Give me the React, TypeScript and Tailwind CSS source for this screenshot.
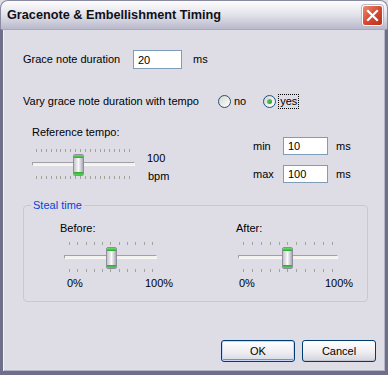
import React from 'react';

type SliderProps = {
  width: string;
  tickPad: string;
  ticks: number;
  thumb: string;
};

function Slider({ width, tickPad, ticks, thumb }: SliderProps) {
  const marks = Array.from({ length: ticks }, (_, i) => i);
  return (
    <div className={`relative h-[30px] ${width}`}>
      <div className={`flex h-[3px] justify-between ${tickPad}`}>
        {marks.map((i) => (
          <span key={i} className="h-[3px] w-px bg-[#a3a39a]" />
        ))}
      </div>
      <div className="mt-[10px] h-[4px] rounded-[1px] border border-t-[#a0a0a6] border-l-[#a0a0a6] border-b-[#f7f7f7] border-r-[#f7f7f7] bg-[#f3f3ee]" />
      <div className={`mt-[10px] flex h-[3px] justify-between ${tickPad}`}>
        {marks.map((i) => (
          <span key={i} className="h-[3px] w-px bg-[#a3a39a]" />
        ))}
      </div>
      <div
        className={`absolute top-[5px] flex h-[22px] w-[11px] flex-col overflow-hidden rounded-[2px] border border-[#8e8e9c] bg-gradient-to-r from-[#c4c4cc] via-[#fafafb] to-[#a9a9b6] ${thumb}`}
      >
        <span className="h-[3px] bg-gradient-to-b from-[#6fdc6f] to-[#27a827]" />
        <span className="flex-1" />
        <span className="h-[3px] bg-gradient-to-b from-[#27a827] to-[#5ed35e]" />
      </div>
    </div>
  );
}

function Radio({ checked }: { checked?: boolean }) {
  return (
    <span className="flex h-[13px] w-[13px] items-center justify-center rounded-full border border-[#1c5180] bg-gradient-to-br from-[#d6d6d0] to-[#ffffff]">
      {checked && (
        <span className="h-[5px] w-[5px] rounded-full bg-gradient-to-br from-[#62d862] to-[#1e9a1e]" />
      )}
    </span>
  );
}

function Field({ value, width }: { value: string; width: string }) {
  return (
    <input
      readOnly
      value={value}
      className={`h-[18px] ${width} border border-[#7f9db9] bg-white pl-[4px] text-[11px] leading-[16px] text-black outline-none`}
    />
  );
}

export default function App() {
  return (
    <div className="flex h-[375px] w-[388px] flex-col bg-[#dedde6] font-['Liberation_Sans',Arial,sans-serif] text-[11px] leading-[13px] text-black">
      <div className="flex h-[29px] items-center justify-between rounded-t-[8px] border border-b-0 border-[#8a8aa3] bg-gradient-to-b from-[#fdfdfe] via-[#e2e2ea] to-[#b8b8cb] pl-[6px] pr-[4px]">
        <span className="text-[12.7px] font-bold text-[#101018]">Gracenote &amp; Embellishment Timing</span>
        <button className="flex h-[21px] w-[21px] items-center justify-center rounded-[3px] border border-white bg-gradient-to-br from-[#ec8a70] via-[#d54a33] to-[#b8301c] shadow-[0_0_0_1px_#b9b9c8]">
          <svg width="13" height="13" viewBox="0 0 13 13">
            <path d="M2 2 L11 11 M11 2 L2 11" stroke="white" strokeWidth="2.2" strokeLinecap="square" />
          </svg>
        </button>
      </div>

      <div className="flex flex-1 flex-col border-x-[3px] border-b-[4px] border-t border-[#6f6f8c] border-t-[#a9a9be] shadow-[inset_1px_0_0_#f2f2f7,inset_-1px_0_0_#b4b4c6,inset_0_-1px_0_#b4b4c6]">
        <div className="flex flex-col pl-[20px] pt-[20px]">
          <div className="flex h-[19px] items-center">
            <span className="w-[110px]">Grace note duration</span>
            <Field value="20" width="w-[49px] h-[19px]" />
            <span className="ml-[11px]">ms</span>
          </div>

          <div className="mt-[25px] flex h-[15px] items-center">
            <span className="w-[195px]">Vary grace note duration with tempo</span>
            <Radio />
            <span className="ml-[3px]">no</span>
            <span className="ml-[17px]">
              <Radio checked />
            </span>
            <span className="ml-[2px] border border-dotted border-black px-px leading-[13px]">yes</span>
          </div>

          <div className="mt-[17px] flex pl-[9px]">
            <div className="flex w-[221px] flex-col">
              <span>Reference tempo:</span>
              <div className="mt-[10px] flex">
                <Slider width="w-[103px]" tickPad="pl-[4px] pr-[5px]" ticks={20} thumb="left-[41px]" />
                <div className="ml-[12px] flex flex-col pt-[3px]">
                  <span>100</span>
                  <span className="ml-px mt-[5px]">bpm</span>
                </div>
              </div>
            </div>
            <div className="mt-[11px] flex flex-col gap-[10px]">
              <div className="flex h-[18px] items-center">
                <span className="w-[30px]">min</span>
                <Field value="10" width="w-[45px]" />
                <span className="ml-[8px]">ms</span>
              </div>
              <div className="flex h-[18px] items-center">
                <span className="w-[30px]">max</span>
                <Field value="100" width="w-[45px]" />
                <span className="ml-[8px]">ms</span>
              </div>
            </div>
          </div>

          <fieldset className="mt-[16px] w-[345px] rounded-[4px] border border-[#cbcbbd] pb-[11px] pt-[10px]">
            <legend className="ml-[7px] px-[2px] text-[#0046d5]">Steal time</legend>
            <div className="flex pl-[36px]">
              <div className="flex w-[176px] flex-col">
                <span>Before:</span>
                <div className="ml-[4px] mt-[7px]">
                  <Slider width="w-[93px]" tickPad="pl-[5px] pr-[4px]" ticks={11} thumb="left-[42px]" />
                </div>
                <div className="ml-[7px] mt-[5px] flex">
                  <span className="w-[78px]">0%</span>
                  <span>100%</span>
                </div>
              </div>
              <div className="flex flex-col">
                <span>After:</span>
                <div className="ml-[2px] mt-[7px]">
                  <Slider width="w-[100px]" tickPad="px-[5px]" ticks={11} thumb="left-[44px]" />
                </div>
                <div className="ml-[3px] mt-[5px] flex">
                  <span className="w-[86px]">0%</span>
                  <span>100%</span>
                </div>
              </div>
            </div>
          </fieldset>
        </div>

        <div className="mt-[38px] flex justify-end gap-[7px] pr-[9px]">
          <button className="h-[22px] w-[74px] rounded-[3px] border border-[#003c74] bg-gradient-to-b from-[#ffffff] via-[#f0f0f4] to-[#d8d8e2] shadow-[inset_0_0_0_1px_#c6d6f7,inset_0_-2px_0_#6f93db]">
            OK
          </button>
          <button className="h-[22px] w-[74px] rounded-[3px] border border-[#003c74] bg-gradient-to-b from-[#ffffff] via-[#f0f0f4] to-[#d4d4de] shadow-[inset_0_-1px_0_#c4c4d0]">
            Cancel
          </button>
        </div>
      </div>
    </div>
  );
}
